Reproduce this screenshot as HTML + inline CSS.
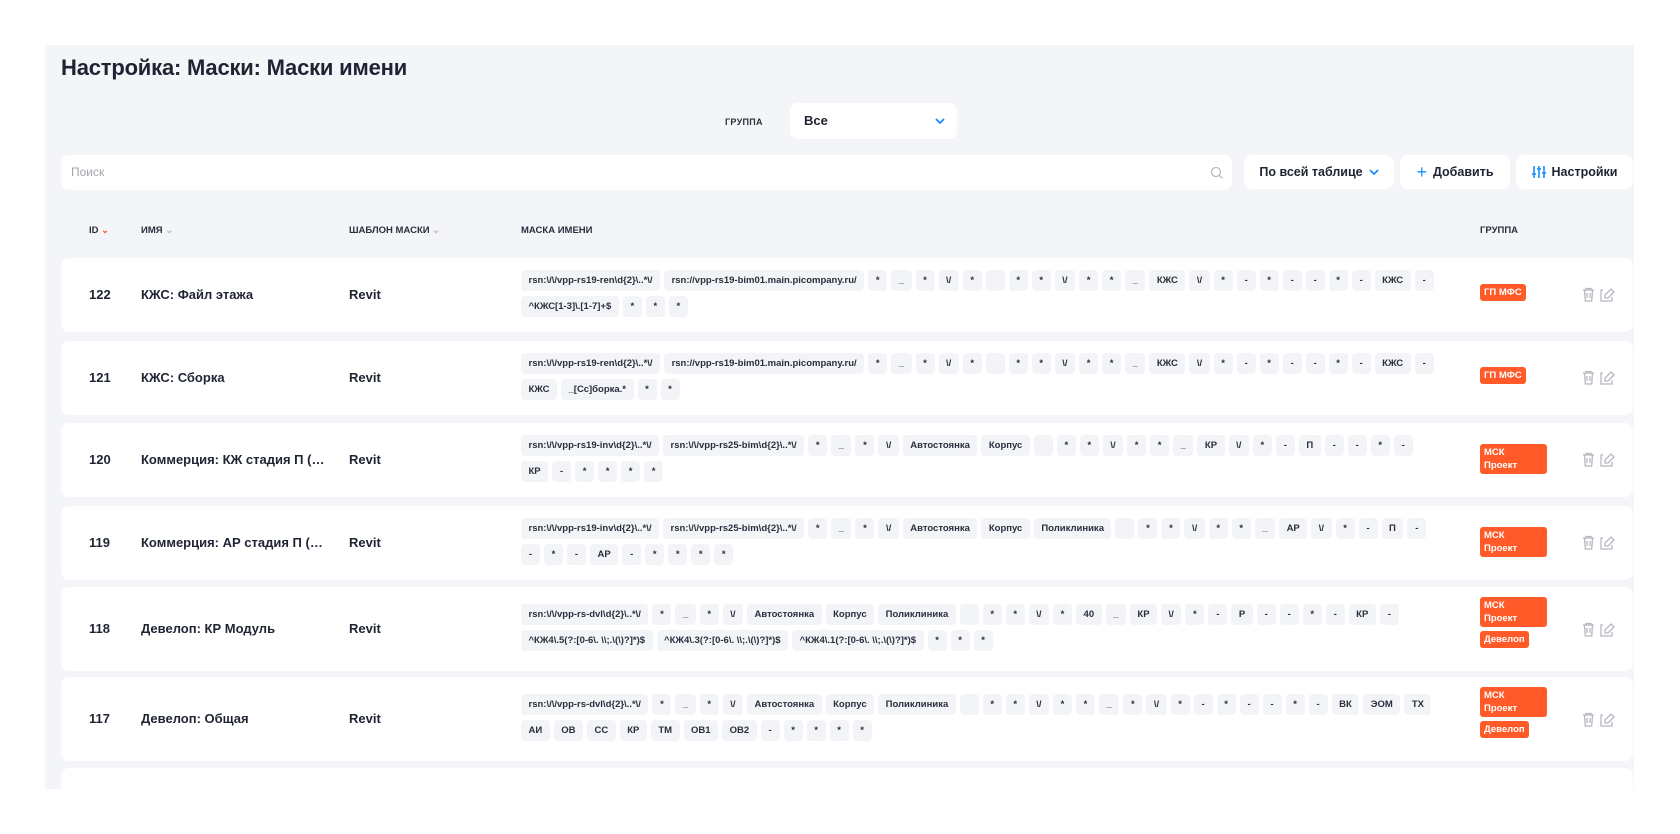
<!DOCTYPE html>
<html><head><meta charset="utf-8"><style>
*{box-sizing:border-box;margin:0;padding:0}
body{width:1680px;height:834px;background:#fff;font-family:"Liberation Sans","Noto Sans CJK SC",sans-serif;color:#1f2433;position:relative;overflow:hidden}
.panel{position:absolute;left:45px;top:45px;width:1589px;height:744px;background:#f4f5f8;overflow:hidden}
.abs{position:absolute}
h1{position:absolute;left:16px;top:10px;font-size:22px;font-weight:bold;color:#1f2433;letter-spacing:-0.2px}
.white{background:#fff;border-radius:8px}
.lbl{font-size:9px;font-weight:bold;color:#2a2f3d;letter-spacing:.3px}
.btn{position:absolute;top:110px;height:34px;background:#fff;border-radius:8px;font-size:12.5px;font-weight:bold;display:flex;align-items:center;justify-content:center;gap:6px}
.hd{position:absolute;top:180px;font-size:9.5px;font-weight:bold;color:#2a2f3d}
.card{position:absolute;left:16px;width:1572px;background:#fff;border-radius:8px}
.id{position:absolute;left:28px;font-size:13px;font-weight:bold}
.nm{position:absolute;left:80px;font-size:13px;font-weight:bold;width:185px;white-space:nowrap;overflow:hidden;text-overflow:ellipsis}
.tp{position:absolute;left:288px;font-size:13px;font-weight:bold}
.chips{position:absolute;left:460px;width:960px}
.ln{display:flex;gap:4px;height:21px;margin-bottom:5px}
.ln span{background:#f3f4f7;border-radius:4px;height:21px;padding:0 7.5px;font-size:9.5px;font-weight:bold;line-height:21px;white-space:nowrap;min-width:19px;text-align:center;color:#2a2f3d}
.bd{position:absolute;left:1419px;}
.bd div{background:#ff5a28;color:#fff;font-size:9.5px;font-weight:bold;border-radius:3px;padding:2px 4px;line-height:13px;margin-bottom:4px;display:table}
.ic{position:absolute;left:1520px}
</style></head><body>
<div class="panel">
<h1>Настройка: Маски: Маски имени</h1>
<div class="abs lbl" style="left:680px;top:72px">ГРУППА</div>
<div class="abs white" style="left:745px;top:58px;width:167px;height:36px"><span class="abs" style="left:14px;top:10px;font-size:13px;font-weight:bold">Все</span>
<svg class="abs" style="left:145px;top:14px" width="10" height="8" viewBox="0 0 10 8"><path d="M1 2l4 4 4-4" stroke="#1a8cff" stroke-width="1.8" fill="none"/></svg></div>
<div class="abs white" style="left:16px;top:110px;width:1171px;height:35px"><span class="abs" style="left:10px;top:10px;font-size:12px;color:#a0a4ad">Поиск</span>
<svg class="abs" style="left:1149px;top:11px" width="14" height="14" viewBox="0 0 14 14"><circle cx="6" cy="6" r="4.5" stroke="#b8bcc4" stroke-width="1.3" fill="none"/><path d="M9.5 9.5l3 3" stroke="#b8bcc4" stroke-width="1.3"/></svg></div>
<div class="btn" style="left:1199px;width:150px">По всей таблице <svg width="10" height="8" viewBox="0 0 10 8"><path d="M1 2l4 4 4-4" stroke="#1a8cff" stroke-width="1.8" fill="none"/></svg></div>
<div class="btn" style="left:1355px;width:110px"><span style="color:#1a8cff;font-size:18px;font-weight:normal">+</span> Добавить</div>
<div class="btn" style="left:1471px;width:117px"><svg width="14" height="14" viewBox="0 0 14 14" stroke="#1a8cff" stroke-width="1.6"><path d="M2 1v12M7 1v12M12 1v12"/><path d="M0 9h4M5 4h4M10 8h4"/></svg> Настройки</div>
<div class="hd" style="left:44px">ID <span style="color:#ff5a28">⌄</span></div>
<div class="hd" style="left:96px">ИМЯ <span style="color:#bbb">⌄</span></div>
<div class="hd" style="left:304px">ШАБЛОН МАСКИ <span style="color:#bbb">⌄</span></div>
<div class="hd" style="left:476px">МАСКА ИМЕНИ</div>
<div class="hd" style="left:1435px">ГРУППА</div>

<div class="card" style="top:213px;height:74px">
<div class="id" style="top:29px">122</div><div class="nm" style="top:29px">КЖС: Файл этажа</div><div class="tp" style="top:29px">Revit</div>
<div class="chips" style="top:12px"><div class="ln"><span>rsn:\/\/vpp-rs19-ren\d{2}\..*\/</span><span>rsn://vpp-rs19-bim01.main.picompany.ru/</span><span>*</span><span>_</span><span>*</span><span>\/</span><span>*</span><span></span><span>*</span><span>*</span><span>\/</span><span>*</span><span>*</span><span>_</span><span>КЖС</span><span>\/</span><span>*</span><span>-</span><span>*</span><span>-</span><span>-</span><span>*</span><span>-</span><span>КЖС</span><span>-</span></div>
<div class="ln"><span>^КЖС[1-3]\.[1-7]+$</span><span>*</span><span>*</span><span>*</span></div></div>
<div class="bd" style="top:26px"><div>ГП МФС</div></div>
<svg class="ic" style="top:29px" width="36" height="15" viewBox="0 0 36 15" stroke="#b5b8bf" stroke-width="1.3" fill="none"><path d="M2 3h11M5 3V1.5h5V3M3.5 3l.8 11h6.4l.8-11M6 6v5M9 6v5"/><path d="M30 2l3 3-6 6h-3v-3zM22 3h-2v11h11v-4"/></svg>
</div>

<div class="card" style="top:296px;height:74px">
<div class="id" style="top:29px">121</div><div class="nm" style="top:29px">КЖС: Сборка</div><div class="tp" style="top:29px">Revit</div>
<div class="chips" style="top:12px"><div class="ln"><span>rsn:\/\/vpp-rs19-ren\d{2}\..*\/</span><span>rsn://vpp-rs19-bim01.main.picompany.ru/</span><span>*</span><span>_</span><span>*</span><span>\/</span><span>*</span><span></span><span>*</span><span>*</span><span>\/</span><span>*</span><span>*</span><span>_</span><span>КЖС</span><span>\/</span><span>*</span><span>-</span><span>*</span><span>-</span><span>-</span><span>*</span><span>-</span><span>КЖС</span><span>-</span></div>
<div class="ln"><span>КЖС</span><span>_[Сс]борка.*</span><span>*</span><span>*</span></div></div>
<div class="bd" style="top:26px"><div>ГП МФС</div></div>
<svg class="ic" style="top:29px" width="36" height="15" viewBox="0 0 36 15" stroke="#b5b8bf" stroke-width="1.3" fill="none"><path d="M2 3h11M5 3V1.5h5V3M3.5 3l.8 11h6.4l.8-11M6 6v5M9 6v5"/><path d="M30 2l3 3-6 6h-3v-3zM22 3h-2v11h11v-4"/></svg>
</div>

<div class="card" style="top:378px;height:74px">
<div class="id" style="top:29px">120</div><div class="nm" style="top:29px">Коммерция: КЖ стадия П (КЖ)</div><div class="tp" style="top:29px">Revit</div>
<div class="chips" style="top:12px"><div class="ln"><span>rsn:\/\/vpp-rs19-inv\d{2}\..*\/</span><span>rsn:\/\/vpp-rs25-bim\d{2}\..*\/</span><span>*</span><span>_</span><span>*</span><span>\/</span><span>Автостоянка</span><span>Корпус</span><span></span><span>*</span><span>*</span><span>\/</span><span>*</span><span>*</span><span>_</span><span>КР</span><span>\/</span><span>*</span><span>-</span><span>П</span><span>-</span><span>-</span><span>*</span><span>-</span></div>
<div class="ln"><span>КР</span><span>-</span><span>*</span><span>*</span><span>*</span><span>*</span></div></div>
<div class="bd" style="top:21px"><div style="width:67px">МСК<br>Проект</div></div>
<svg class="ic" style="top:29px" width="36" height="15" viewBox="0 0 36 15" stroke="#b5b8bf" stroke-width="1.3" fill="none"><path d="M2 3h11M5 3V1.5h5V3M3.5 3l.8 11h6.4l.8-11M6 6v5M9 6v5"/><path d="M30 2l3 3-6 6h-3v-3zM22 3h-2v11h11v-4"/></svg>
</div>

<div class="card" style="top:461px;height:74px">
<div class="id" style="top:29px">119</div><div class="nm" style="top:29px">Коммерция: АР стадия П (КР)</div><div class="tp" style="top:29px">Revit</div>
<div class="chips" style="top:12px"><div class="ln"><span>rsn:\/\/vpp-rs19-inv\d{2}\..*\/</span><span>rsn:\/\/vpp-rs25-bim\d{2}\..*\/</span><span>*</span><span>_</span><span>*</span><span>\/</span><span>Автостоянка</span><span>Корпус</span><span>Поликлиника</span><span></span><span>*</span><span>*</span><span>\/</span><span>*</span><span>*</span><span>_</span><span>АР</span><span>\/</span><span>*</span><span>-</span><span>П</span><span>-</span></div>
<div class="ln"><span>-</span><span>*</span><span>-</span><span>АР</span><span>-</span><span>*</span><span>*</span><span>*</span><span>*</span></div></div>
<div class="bd" style="top:21px"><div style="width:67px">МСК<br>Проект</div></div>
<svg class="ic" style="top:29px" width="36" height="15" viewBox="0 0 36 15" stroke="#b5b8bf" stroke-width="1.3" fill="none"><path d="M2 3h11M5 3V1.5h5V3M3.5 3l.8 11h6.4l.8-11M6 6v5M9 6v5"/><path d="M30 2l3 3-6 6h-3v-3zM22 3h-2v11h11v-4"/></svg>
</div>

<div class="card" style="top:542px;height:84px">
<div class="id" style="top:34px">118</div><div class="nm" style="top:34px">Девелоп: КР Модуль</div><div class="tp" style="top:34px">Revit</div>
<div class="chips" style="top:17px"><div class="ln"><span>rsn:\/\/vpp-rs-dvl\d{2}\..*\/</span><span>*</span><span>_</span><span>*</span><span>\/</span><span>Автостоянка</span><span>Корпус</span><span>Поликлиника</span><span></span><span>*</span><span>*</span><span>\/</span><span>*</span><span>40</span><span>_</span><span>КР</span><span>\/</span><span>*</span><span>-</span><span>Р</span><span>-</span><span>-</span><span>*</span><span>-</span><span>КР</span><span>-</span></div>
<div class="ln"><span>^КЖ4\.5(?:[0-6\. \\;.\(\)?]*)$</span><span>^КЖ4\.3(?:[0-6\. \\;.\(\)?]*)$</span><span>^КЖ4\.1(?:[0-6\. \\;.\(\)?]*)$</span><span>*</span><span>*</span><span>*</span></div></div>
<div class="bd" style="top:10px"><div style="width:67px">МСК<br>Проект</div><div>Девелоп</div></div>
<svg class="ic" style="top:35px" width="36" height="15" viewBox="0 0 36 15" stroke="#b5b8bf" stroke-width="1.3" fill="none"><path d="M2 3h11M5 3V1.5h5V3M3.5 3l.8 11h6.4l.8-11M6 6v5M9 6v5"/><path d="M30 2l3 3-6 6h-3v-3zM22 3h-2v11h11v-4"/></svg>
</div>

<div class="card" style="top:632px;height:84px">
<div class="id" style="top:34px">117</div><div class="nm" style="top:34px">Девелоп: Общая</div><div class="tp" style="top:34px">Revit</div>
<div class="chips" style="top:17px"><div class="ln"><span>rsn:\/\/vpp-rs-dvl\d{2}\..*\/</span><span>*</span><span>_</span><span>*</span><span>\/</span><span>Автостоянка</span><span>Корпус</span><span>Поликлиника</span><span></span><span>*</span><span>*</span><span>\/</span><span>*</span><span>*</span><span>_</span><span>*</span><span>\/</span><span>*</span><span>-</span><span>*</span><span>-</span><span>-</span><span>*</span><span>-</span><span>ВК</span><span>ЭОМ</span><span>ТХ</span></div>
<div class="ln"><span>АИ</span><span>ОВ</span><span>СС</span><span>КР</span><span>ТМ</span><span>ОВ1</span><span>ОВ2</span><span>-</span><span>*</span><span>*</span><span>*</span><span>*</span></div></div>
<div class="bd" style="top:10px"><div style="width:67px">МСК<br>Проект</div><div>Девелоп</div></div>
<svg class="ic" style="top:35px" width="36" height="15" viewBox="0 0 36 15" stroke="#b5b8bf" stroke-width="1.3" fill="none"><path d="M2 3h11M5 3V1.5h5V3M3.5 3l.8 11h6.4l.8-11M6 6v5M9 6v5"/><path d="M30 2l3 3-6 6h-3v-3zM22 3h-2v11h11v-4"/></svg>
</div>
<div class="card" style="top:723px;height:60px"></div>
</div>
</body></html>
